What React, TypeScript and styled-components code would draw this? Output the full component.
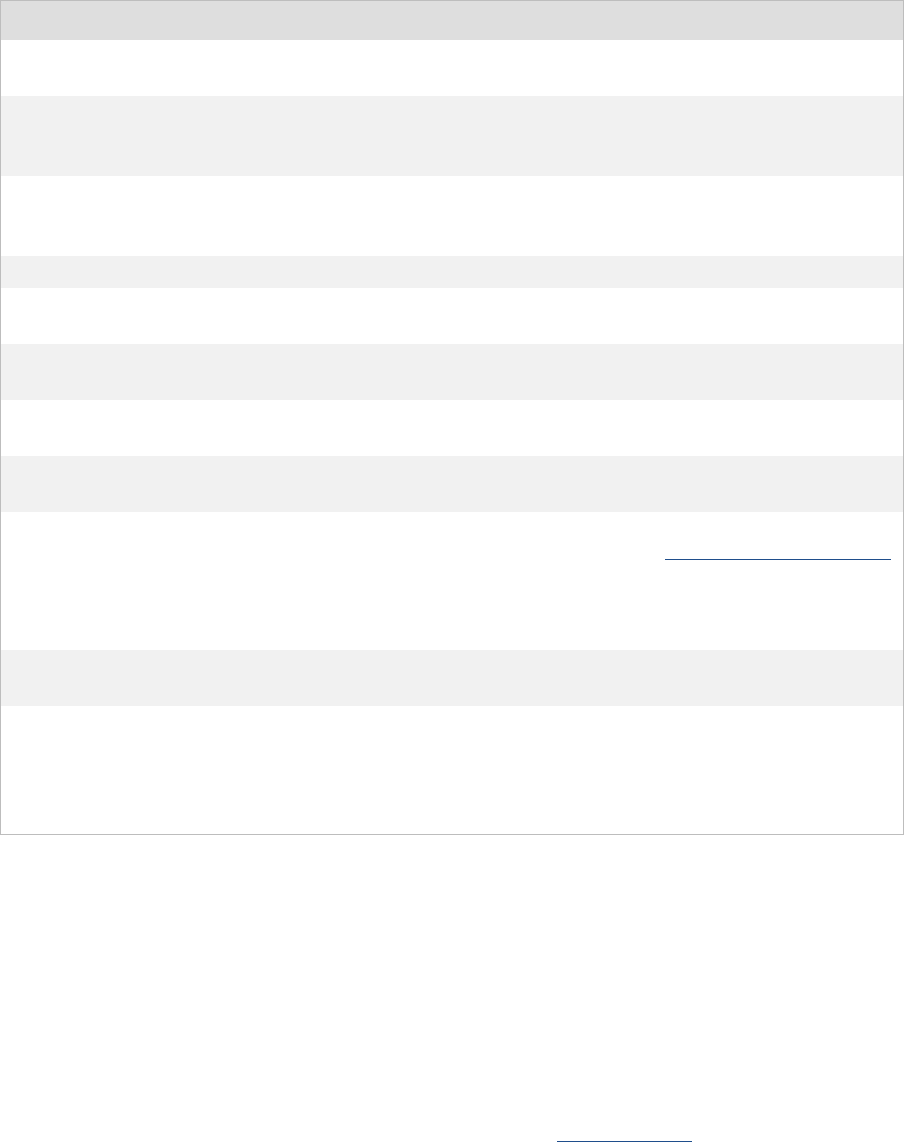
import React from 'react';
import styled, {createGlobalStyle} from "styled-components";

const GlobalStyle = createGlobalStyle`
  html, body {
    margin: 0;
    padding: 0;
    background: #ffffff;
    font-family: "Liberation Sans", Arial, sans-serif;
  }
`;

const rows = [
    {height: 56, link: 0},
    {height: 80, link: 0},
    {height: 80, link: 0},
    {height: 32, link: 0},
    {height: 56, link: 0},
    {height: 56, link: 0},
    {height: 56, link: 0},
    {height: 56, link: 0},
    {height: 138, link: 226},
    {height: 56, link: 0},
    {height: 128, link: 0},
];

export default function App() {
    return (
        <Page>
            <GlobalStyle/>
            <Table>
                <HeaderRow/>
                {rows.map((row, i) => (
                    <Row key={i} $height={row.height} $striped={i % 2 === 1}>
                        {row.link > 0 && (
                            <LinkCell>
                                <LinkLine $width={row.link}/>
                            </LinkCell>
                        )}
                    </Row>
                ))}
            </Table>
            <Footer>
                <LinkLine $width={135}/>
            </Footer>
        </Page>
    );
}

const Page = styled.div`
  width: 904px;
  display: flex;
  flex-direction: column;
`;

const Table = styled.div`
  width: 904px;
  box-sizing: border-box;
  border: 1px solid #bdbdbd;
  display: flex;
  flex-direction: column;
`;

const HeaderRow = styled.div`
  height: 39px;
  background: #dedede;
`;

const Row = styled.div<{ $height: number; $striped: boolean }>`
  height: ${p => p.$height}px;
  flex: none;
  background: ${p => (p.$striped ? "#f1f1f1" : "#ffffff")};
  display: flex;
  justify-content: flex-end;
  align-items: flex-start;
`;

const LinkCell = styled.div`
  padding: 47px 12px 0 0;
`;

const LinkLine = styled.span<{ $width: number }>`
  display: block;
  width: ${p => p.$width}px;
  height: 0;
  border-bottom: 1px solid #1f4e8c;
`;

const Footer = styled.div`
  display: flex;
  align-items: flex-start;
  padding: 306px 0 0 557px;
  height: 320px;
  box-sizing: border-box;
`;
